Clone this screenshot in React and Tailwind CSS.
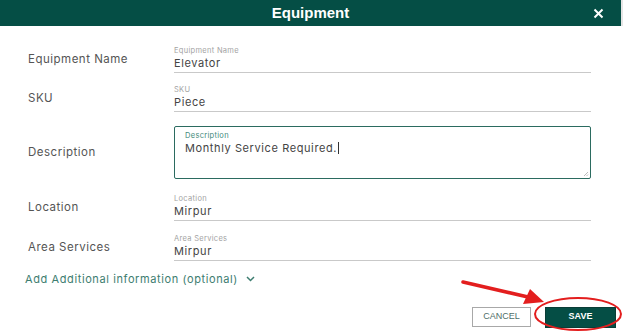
const font = { fontFamily: "Inter, 'Open Sans', sans-serif" };

function LineField({ label, value, className }) {
  return (
    <div className={`border-b border-[#c9c9c9] pb-[2px] ${className}`}>
      <div className="text-[7.5px] leading-[10px] tracking-[0.3px] text-[#a3a3a3]">{label}</div>
      <div className="text-[11px] leading-[14px] tracking-[0.6px] text-[#444]">{value}</div>
    </div>
  );
}

function Row({ label, children, className }) {
  return (
    <div className={`flex items-center ${className}`}>
      <div className="w-[174px] shrink-0 pl-[28px] text-[11.5px] tracking-[0.5px] text-[#555]">{label}</div>
      <div className="w-[417px]">{children}</div>
    </div>
  );
}

export default function App() {
  return (
    <div className="relative h-[334px] w-[623px] overflow-hidden bg-white" style={font}>
      <div className="flex h-[26px] items-center justify-center bg-[#054e45] border-r-2 border-[#e5e5e5] relative">
        <span className="text-[15px] font-bold text-white" style={{ fontFamily: "'Liberation Sans', Arial, sans-serif" }}>
          Equipment
        </span>
        <svg className="absolute right-[17px] top-[8px]" width="11" height="11" viewBox="0 0 11 11">
          <path d="M1.5 1.5 L9.5 9.5 M9.5 1.5 L1.5 9.5" stroke="white" strokeWidth="2" />
        </svg>
      </div>

      <Row label="Equipment Name" className="mt-[20px]">
        <LineField label="Equipment Name" value="Elevator" />
      </Row>
      <Row label="SKU" className="mt-[12px]">
        <LineField label="SKU" value="Piece" />
      </Row>
      <Row label="Description" className="mt-[14px]">
        <div className="relative h-[53px] rounded-[2px] border-[1.5px] border-[#2b6b60] px-[10px] pt-[4px]">
          <div className="text-[7.5px] leading-[10px] tracking-[0.3px] text-[#3f8a7b]">Description</div>
          <div className="flex items-center text-[11px] leading-[14px] tracking-[0.6px] text-[#444]">
            Monthly Service Required.
            <span className="ml-[1px] inline-block h-[12px] w-px bg-[#333]" />
          </div>
          <svg className="absolute bottom-[1px] right-[1px]" width="6" height="6" viewBox="0 0 6 6">
            <path d="M5 1 L1 5 M5 3.5 L3.5 5" stroke="#aaa" strokeWidth="0.8" />
          </svg>
        </div>
      </Row>
      <Row label="Location" className="mt-[15px]">
        <LineField label="Location" value="Mirpur" />
      </Row>
      <Row label="Area Services" className="mt-[13px]">
        <LineField label="Area Services" value="Mirpur" />
      </Row>

      <div className="mt-[10px] flex items-center pl-[25px] text-[11px] tracking-[0.6px] text-[#3d7d70]">
        Add Additional information (optional)
        <svg className="ml-[8px]" width="9" height="6" viewBox="0 0 9 6">
          <path d="M1 1 L4.5 4.5 L8 1" stroke="#3d7d70" strokeWidth="1.5" fill="none" />
        </svg>
      </div>

      <div className="mt-[19px] flex justify-end gap-[14px] pr-[7px]" style={{ fontFamily: "'Liberation Sans', Arial, sans-serif" }}>
        <button className="h-[20px] w-[59px] border border-[#a8a8a8] bg-white text-[9px] text-[#4f6e69]">
          CANCEL
        </button>
        <button className="h-[21px] w-[71px] border border-[#0a3d36] bg-[#054e45] text-[9px] font-bold text-white">
          SAVE
        </button>
      </div>

      <svg className="pointer-events-none absolute left-0 top-0" width="623" height="334">
        <line x1="463" y1="282" x2="528" y2="297" stroke="#e31e1e" strokeWidth="3.5" strokeLinecap="round" />
        <polygon points="544,302 523,304 530,289" fill="#e31e1e" />
        <ellipse cx="578" cy="314" rx="43" ry="16" fill="none" stroke="#e31e1e" strokeWidth="2" />
      </svg>
    </div>
  );
}
